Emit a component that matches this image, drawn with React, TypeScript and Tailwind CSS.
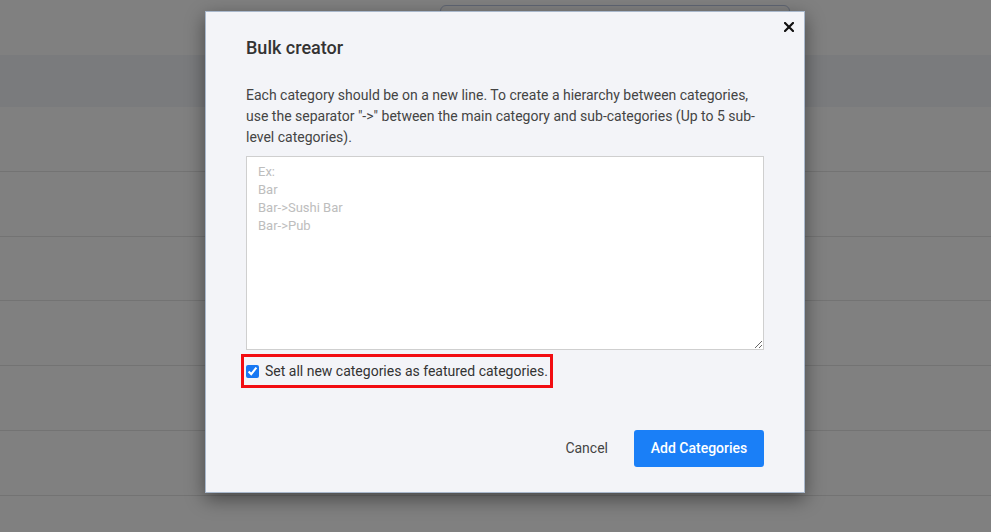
import { useState } from "react";

const ROWS = [0, 1, 2, 3, 4, 5];

export default function App() {
  const [featured, setFeatured] = useState(true);
  const [text, setText] = useState("");

  return (
    <div
      className="relative h-[532px] w-[991px] overflow-hidden bg-[#808080]"
      style={{ fontFamily: "Roboto, 'Liberation Sans', sans-serif" }}
    >
      {/* page behind the overlay */}
      <div className="h-[55px] pt-[5px]">
        <div className="ml-[440px] h-[36px] w-[350px] rounded-md border border-[#5f6673]" />
      </div>
      <div className="h-[52px] bg-[#7a7b7d]" />
      {ROWS.map((r) => (
        <div key={r} className="h-[64.8px] border-b border-[#737373]" />
      ))}

      {/* modal */}
      <div className="absolute left-[205px] top-[11px] w-[600px] border border-[#a9b8cc] bg-[#f3f4f8] px-10 pb-[25px] pt-6 shadow-[0_6px_18px_rgba(0,0,0,0.45)]">
        <button className="absolute right-[8px] top-[8px] flex h-[14px] w-[14px] items-center justify-center text-[#111]">
          <svg width="10" height="10" viewBox="0 0 10 10" fill="none">
            <path d="M1 1l8 8M9 1L1 9" stroke="currentColor" strokeWidth="2.2" strokeLinecap="square" />
          </svg>
        </button>

        <h2 className="text-[18px] font-medium leading-6 text-[#333]">Bulk creator</h2>

        <p className="mt-[25px] text-[14px] leading-[21px] text-[#444]">
          Each category should be on a new line. To create a hierarchy between categories, use the
          separator "-&gt;" between the main category and sub-categories (Up to 5 sub-level
          categories).
        </p>

        <textarea
          value={text}
          onChange={(e) => setText(e.target.value)}
          placeholder={"Ex:\nBar\nBar->Sushi Bar\nBar->Pub"}
          className="mt-2 block h-[194px] w-full border border-[#cfcfcf] bg-white px-[11px] pt-[6px] text-[13px] leading-[18px] text-[#333] outline-none placeholder:text-[#bdbdbd]"
        />

        <label className="-ml-[5px] mt-1 inline-flex items-center gap-[6px] border-[3px] border-[#f20d12] px-[2px] py-[4px] text-[14px] leading-5 text-[#333]">
          <input
            type="checkbox"
            checked={featured}
            onChange={(e) => setFeatured(e.target.checked)}
            className="m-0 h-[13px] w-[13px] accent-[#1677f3]"
          />
          Set all new categories as featured categories.
        </label>

        <div className="mt-[42px] flex items-center justify-end gap-[26px]">
          <button className="text-[14px] text-[#444]">Cancel</button>
          <button className="h-[37px] w-[130px] rounded-[3px] bg-[#1a7ff7] text-[14px] font-medium text-white">
            Add Categories
          </button>
        </div>
      </div>
    </div>
  );
}
